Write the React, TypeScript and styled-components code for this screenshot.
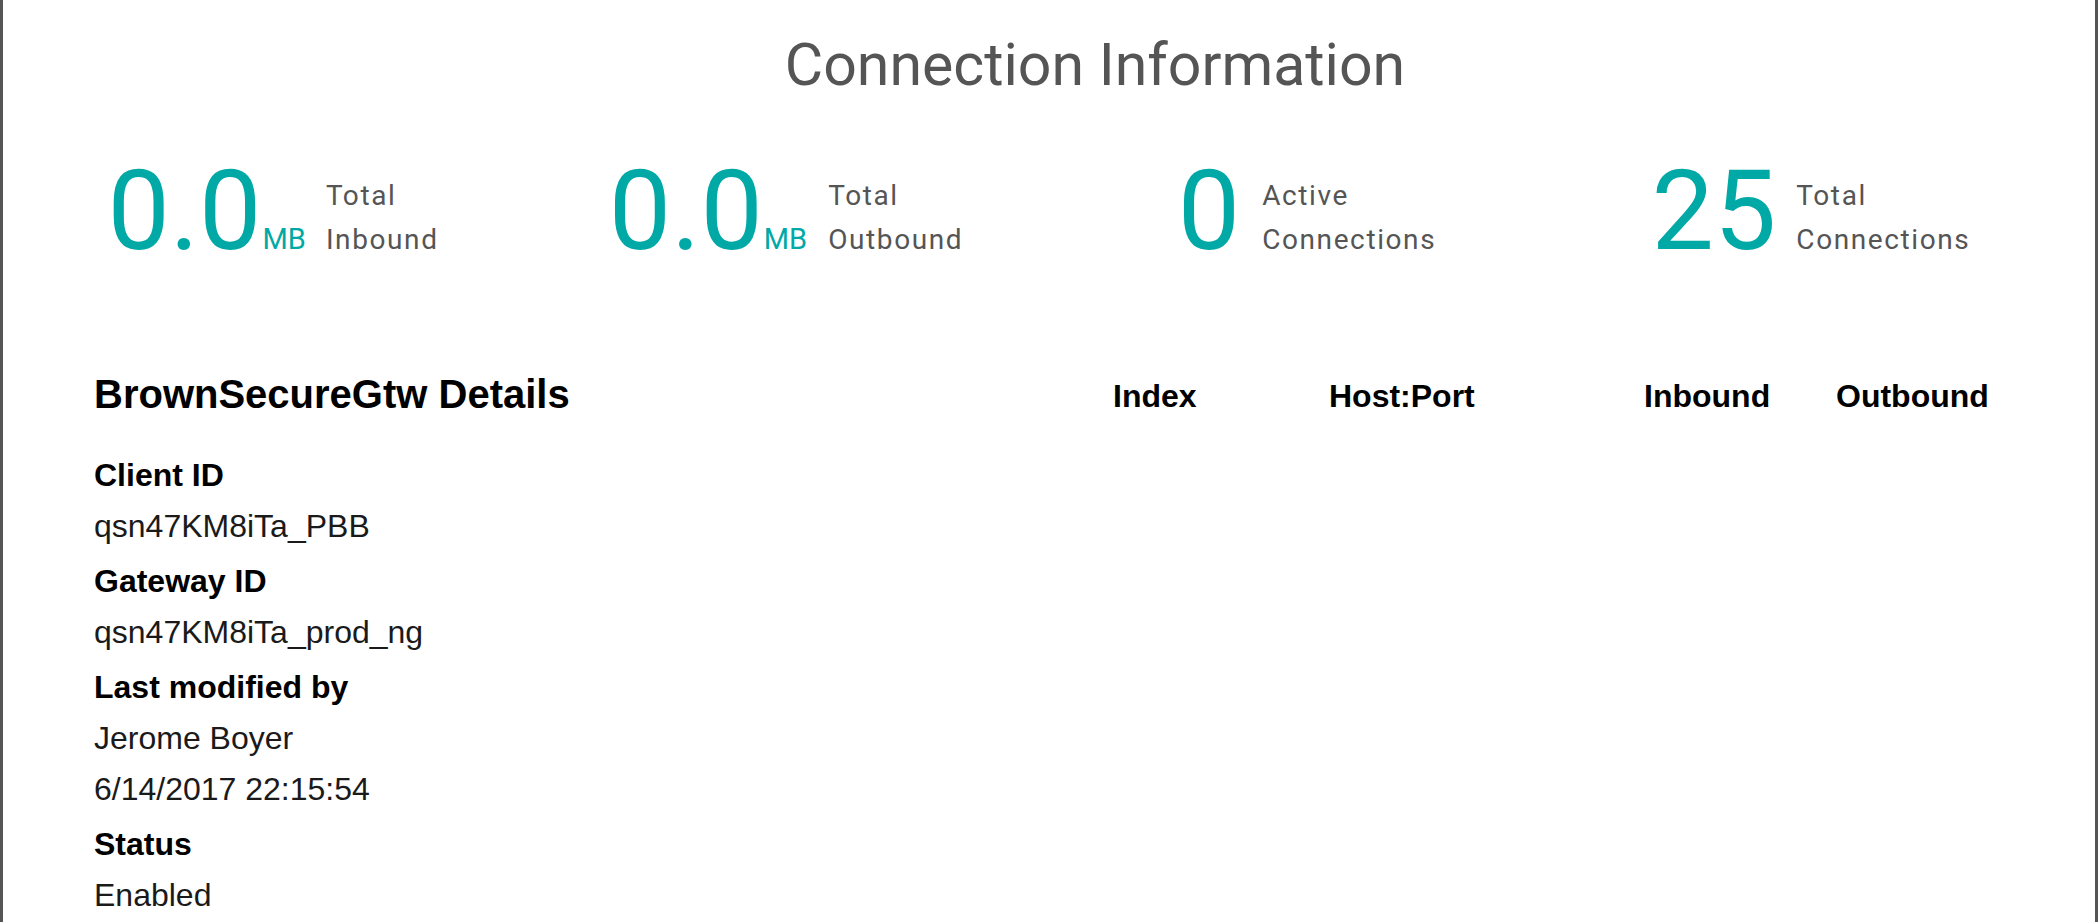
import React from "react";
import styled, { createGlobalStyle } from "styled-components";

const GlobalStyle = createGlobalStyle`
  html, body {
    margin: 0;
    padding: 0;
    background: #ffffff;
    overflow: hidden;
  }
  * { box-sizing: border-box; }
`;

const Frame = styled.div`
  height: 922px;
  border-left: 3px solid #555555;
  border-right: 3px solid #555555;
  background: #ffffff;
  display: flex;
  flex-direction: column;
`;

const Title = styled.h1`
  margin: 35px 0 0 0;
  padding-left: 92px;
  text-align: center;
  font-family: Roboto, "Liberation Sans", sans-serif;
  font-weight: 400;
  font-size: 59px;
  line-height: 60px;
  color: #555555;
`;

const StatsRow = styled.div`
  display: grid;
  grid-template-columns: 512px 514px 528px 480px;
  justify-items: center;
  padding-left: 14px;
  margin-top: 61px;
`;

const Stat = styled.div<{ $gap: number }>`
  display: flex;
  align-items: last baseline;
  gap: ${(p) => p.$gap}px;
`;

const Figure = styled.div`
  display: flex;
  align-items: baseline;
  color: #00a9a5;
  font-family: Roboto, "Liberation Sans", sans-serif;
`;

const Number = styled.span`
  font-size: 111px;
  line-height: 111px;
  font-weight: 400;
`;

const Unit = styled.span`
  font-size: 29px;
  line-height: 29px;
  margin-left: 1px;
`;

const StatLabel = styled.div`
  display: flex;
  flex-direction: column;
  font-family: Roboto, "Liberation Sans", sans-serif;
  font-size: 28px;
  line-height: 44px;
  letter-spacing: 1.6px;
  color: #555555;
`;

const Details = styled.section`
  display: flex;
  margin-top: 107px;
  padding-left: 91px;
  font-family: "Liberation Sans", Arial, sans-serif;
  color: #111111;
`;

const InfoColumn = styled.div`
  flex: 0 0 1019px;
  display: flex;
  flex-direction: column;
`;

const Heading = styled.h2`
  margin: 0 0 36px 0;
  font-size: 40px;
  line-height: 40px;
  font-weight: 700;
  color: #000000;
`;

const Field = styled.div<{ $label?: boolean; $first?: boolean }>`
  font-size: 32px;
  line-height: 51.4px;
  font-weight: ${(p) => (p.$label ? 700 : 400)};
  color: ${(p) => (p.$label ? "#000000" : "#1a1a1a")};
  margin-top: ${(p) => (p.$label && !p.$first ? "3px" : "0")};
`;

const Table = styled.div`
  display: grid;
  grid-template-columns: 216px 315px 192px auto;
  align-content: start;
`;

const HeaderCell = styled.div`
  font-size: 32px;
  line-height: 45.5px;
  font-weight: 700;
  color: #000000;
  white-space: nowrap;
`;

type StatInfo = {
  value: string;
  unit?: string;
  lines: [string, string];
  gap: number;
};

const stats: StatInfo[] = [
  { value: "0.0", unit: "MB", lines: ["Total", "Inbound"], gap: 20 },
  { value: "0.0", unit: "MB", lines: ["Total", "Outbound"], gap: 21 },
  { value: "0", lines: ["Active", "Connections"], gap: 22 },
  { value: "25", lines: ["Total", "Connections"], gap: 20 },
];

const fields: { text: string; label?: boolean }[] = [
  { text: "Client ID", label: true },
  { text: "qsn47KM8iTa_PBB" },
  { text: "Gateway ID", label: true },
  { text: "qsn47KM8iTa_prod_ng" },
  { text: "Last modified by", label: true },
  { text: "Jerome Boyer" },
  { text: "6/14/2017 22:15:54" },
  { text: "Status", label: true },
  { text: "Enabled" },
];

const columns = ["Index", "Host:Port", "Inbound", "Outbound"];

export default function App() {
  return (
    <>
      <GlobalStyle />
      <Frame>
        <Title>Connection Information</Title>
        <StatsRow>
          {stats.map((s, i) => (
            <Stat key={i} $gap={s.gap}>
              <Figure>
                <Number>{s.value}</Number>
                {s.unit && <Unit>{s.unit}</Unit>}
              </Figure>
              <StatLabel>
                <span>{s.lines[0]}</span>
                <span>{s.lines[1]}</span>
              </StatLabel>
            </Stat>
          ))}
        </StatsRow>
        <Details>
          <InfoColumn>
            <Heading>BrownSecureGtw Details</Heading>
            {fields.map((f, i) => (
              <Field key={i} $label={f.label} $first={i === 0}>
                {f.text}
              </Field>
            ))}
          </InfoColumn>
          <Table>
            {columns.map((c) => (
              <HeaderCell key={c}>{c}</HeaderCell>
            ))}
          </Table>
        </Details>
      </Frame>
    </>
  );
}
